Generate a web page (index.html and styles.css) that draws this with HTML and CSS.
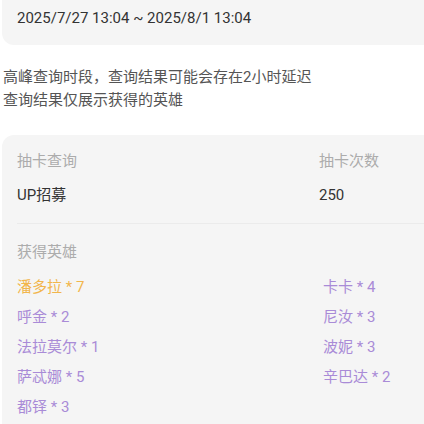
FILE: index.html
```html
<!DOCTYPE html>
<html lang="zh">
<head>
<meta charset="utf-8">
<link rel="stylesheet" href="styles.css">
</head>
<body>
<div class="page">
  <div class="card time-card">
    <div class="time">2025/7/27 13:04 ~ 2025/8/1 13:04</div>
  </div>
  <div class="notice">
    <div>高峰查询时段，查询结果可能会存在2小时延迟</div>
    <div>查询结果仅展示获得的英雄</div>
  </div>
  <div class="card result-card">
    <div class="pair head">
      <span>抽卡查询</span>
      <span>抽卡次数</span>
    </div>
    <div class="pair value">
      <span>UP招募</span>
      <span>250</span>
    </div>
    <div class="divider"></div>
    <div class="label">获得英雄</div>
    <div class="heroes">
      <span class="hero gold">潘多拉 * 7</span>
      <span class="hero">卡卡 * 4</span>
      <span class="hero">呼金 * 2</span>
      <span class="hero">尼汝 * 3</span>
      <span class="hero">法拉莫尔 * 1</span>
      <span class="hero">波妮 * 3</span>
      <span class="hero">萨忒娜 * 5</span>
      <span class="hero">辛巴达 * 2</span>
      <span class="hero">都铎 * 3</span>
    </div>
  </div>
</div>
</body>
</html>
```
FILE: styles.css
```css
html, body {
  margin: 0;
  padding: 0;
  background: #ffffff;
  overflow: hidden;
}
.page {
  width: 424px;
  height: 424px;
  overflow: hidden;
  padding-left: 2px;
  box-sizing: border-box;
  font-family: Roboto, "Noto Sans CJK SC", sans-serif;
  font-size: 15px;
}
.card {
  background: #f5f5f5;
  border-radius: 12px;
  margin-right: -30px;
  padding-left: 15px;
}
.time-card {
  margin-top: -10px;
  padding-top: 17px;
  padding-bottom: 16px;
}
.time {
  line-height: 22px;
  color: #333333;
}
.notice {
  margin-top: 21px;
  padding-left: 1px;
  line-height: 23px;
  color: #555555;
}
.result-card {
  margin-top: 23px;
  padding-top: 15px;
  padding-bottom: 20px;
}
.pair {
  display: grid;
  grid-template-columns: 302px 1fr;
  line-height: 22px;
}
.head {
  color: #acacac;
}
.value {
  margin-top: 12px;
  color: #333333;
}
.divider {
  margin-top: 17px;
  height: 1px;
  background: #ebebeb;
}
.label {
  margin-top: 17px;
  line-height: 22px;
  color: #acacac;
}
.heroes {
  margin-top: 9px;
  display: grid;
  grid-template-columns: 306px 1fr;
  line-height: 30px;
}
.hero {
  color: #a98bd7;
}
.hero.gold {
  color: #f2b64c;
}
```
